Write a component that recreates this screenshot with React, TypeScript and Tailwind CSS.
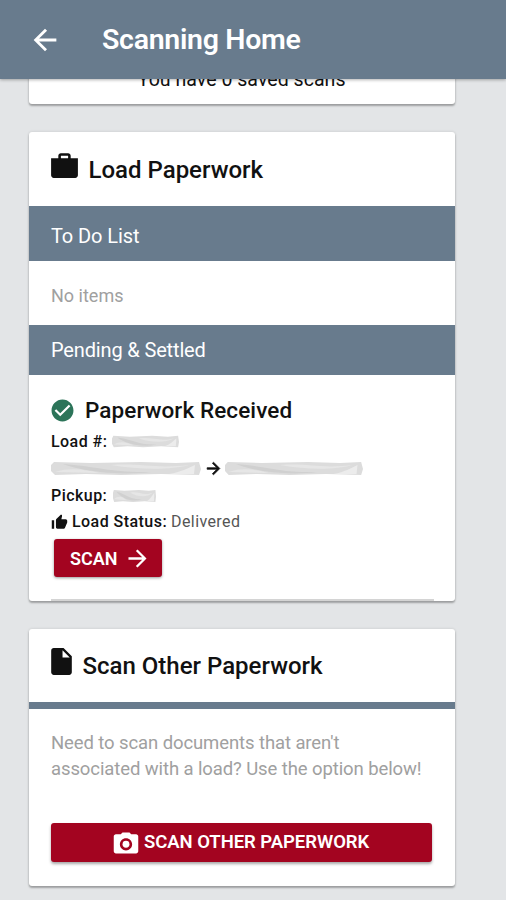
import type { ReactNode } from 'react';
import {
  IoMdArrowBack,
  IoMdArrowForward,
  IoMdBriefcase,
  IoMdCamera,
  IoMdCheckmarkCircle,
  IoMdDocument,
  IoMdThumbsUp,
} from 'react-icons/io';

function Card({ className, children }: { className: string; children: ReactNode }) {
  return (
    <section
      className={`mx-auto w-[426px] shrink-0 overflow-hidden rounded-[3px] bg-white shadow-[0_2px_2px_rgba(0,0,0,0.28),0_0_3px_rgba(0,0,0,0.14)] ${className}`}
    >
      {children}
    </section>
  );
}

// Value hidden behind a brushed smear
function Redacted({ width, className }: { width: number; className: string }) {
  return (
    <svg
      className={`shrink-0 ${className}`}
      style={{ width }}
      viewBox="0 0 150 15"
      preserveAspectRatio="none"
      aria-hidden="true"
    >
      <path d="M3 1 L40 2 L90 1 L125 2 L148 1 L150 8 L148 14 L110 13 L70 14 L35 13 L4 14 L0 10 L0 4 Z" fill="#dcdcdc" />
      <path d="M12 3 C45 5 60 12 100 11 C75 14 50 12 30 8 C22 6 16 5 12 3 Z" fill="#d0d0d0" />
      <path d="M60 4 C90 2 105 8 138 4 C120 9 90 9 60 4 Z" fill="#e6e6e6" />
      <path d="M4 11 C20 6 35 9 48 12 Z" fill="#e6e6e6" />
      <path d="M118 13 C130 11 137 7 144 4 L143 13 Z" fill="#ececec" />
    </svg>
  );
}

export default function App() {
  return (
    <div className="flex h-[900px] w-[506px] flex-col overflow-hidden bg-[#e3e5e7] font-['Roboto','Liberation_Sans',sans-serif] text-[#111]">
      <header className="z-10 flex h-[79px] shrink-0 items-center bg-[#687b8d] pl-[28px] text-white shadow-[0_1px_3px_rgba(0,0,0,0.3)]">
        <button type="button" aria-label="Back">
          <IoMdArrowBack className="size-[34px]" />
        </button>
        <h1 className="ml-[40px] pt-px text-[28.5px] leading-8 font-semibold tracking-[-0.3px]">Scanning Home</h1>
      </header>

      <main className="flex min-h-0 grow flex-col pr-[23px]">
        <Card className="-mt-[20px] h-[45px]">
          <p className="pt-[9px] text-center text-[19.6px] leading-6">You have 0 saved scans</p>
        </Card>

        <Card className="mt-7 h-[469px]">
          <div className="flex h-[74px] items-center pl-[19px]">
            <IoMdBriefcase className="mb-[7px] size-[33px]" />
            <h2 className="ml-[8px] pt-px text-[24px] leading-7 font-medium">Load Paperwork</h2>
          </div>
          <h3 className="flex h-[55px] items-center bg-[#687b8d] pt-1 pl-[22.5px] text-[20px] leading-6 tracking-[-0.1px] text-white">
            To Do List
          </h3>
          <p className="flex h-[64px] items-center pt-1 pl-[22.5px] text-[18px] text-[#a0a0a0]">No items</p>
          <h3 className="flex h-[50px] items-center bg-[#687b8d] pl-[22.5px] text-[20px] leading-6 tracking-[-0.15px] text-white">
            Pending &amp; Settled
          </h3>
          <div className="px-[22.5px] pt-[21px] text-[16px]">
            <div className="flex h-[28px] items-center">
              <IoMdCheckmarkCircle className="-ml-[2px] size-[27px] text-[#2c7459]" />
              <h4 className="ml-[9px] text-[22.5px] leading-7 font-medium tracking-[0.1px]">Paperwork Received</h4>
            </div>
            <div className="flex h-[34px] items-center pt-px">
              <span className="font-medium tracking-[0.45px]">Load #:</span>
              <Redacted width={67} className="ml-[5px] h-[13px]" />
            </div>
            <div className="flex h-[20px] items-center">
              <Redacted width={150} className="h-[15px]" />
              <IoMdArrowForward className="ml-[3px] size-[19px] stroke-current stroke-[20]" />
              <Redacted width={138} className="ml-[2px] h-[15px]" />
            </div>
            <div className="flex h-[34px] items-center pt-px">
              <span className="font-medium tracking-[0.45px]">Pickup:</span>
              <Redacted width={43} className="ml-[6px] h-[14px]" />
            </div>
            <div className="flex h-[20px] items-center">
              <IoMdThumbsUp className="-ml-px mb-[2px] size-[19px]" />
              <span className="ml-[3px] font-medium tracking-[0.45px]">Load Status:</span>
              <span className="ml-[4px] tracking-[0.4px] text-[#555]">Delivered</span>
            </div>
            <button
              type="button"
              className="mt-[7px] ml-[3px] flex h-[38px] w-[108px] items-center rounded-[3px] bg-[#a30420] pl-[16px] text-[18px] font-semibold text-white shadow-[0_1px_3px_rgba(0,0,0,0.4)]"
            >
              SCAN
              <IoMdArrowForward className="ml-[6px] size-[27px]" />
            </button>
            <div className="mt-[22px] h-[2px] w-[383px] bg-[#d4d4d4]" />
          </div>
        </Card>

        <Card className="mt-7 h-[257px]">
          <div className="flex h-[73px] items-center pl-[16px]">
            <IoMdDocument className="mb-[8px] size-[33px]" />
            <h2 className="ml-[5px] text-[24px] leading-7 font-medium">Scan Other Paperwork</h2>
          </div>
          <div className="h-[7px] bg-[#687b8d]" />
          <p className="pt-[21px] pl-[22.5px] text-[18.5px] leading-[26px] tracking-[-0.1px] text-[#a0a0a0]">
            Need to scan documents that aren't
            <br />
            associated with a load? Use the option below!
          </p>
          <button
            type="button"
            className="mt-[41px] ml-[22.5px] flex h-[39px] w-[381px] items-center rounded-[3px] bg-[#a30420] pl-[61px] text-[18.5px] font-semibold tracking-[-0.05px] text-white shadow-[0_2px_3px_rgba(0,0,0,0.35)]"
          >
            <IoMdCamera className="size-[28px]" />
            <span className="ml-[4px]">SCAN OTHER PAPERWORK</span>
          </button>
        </Card>
      </main>
    </div>
  );
}
